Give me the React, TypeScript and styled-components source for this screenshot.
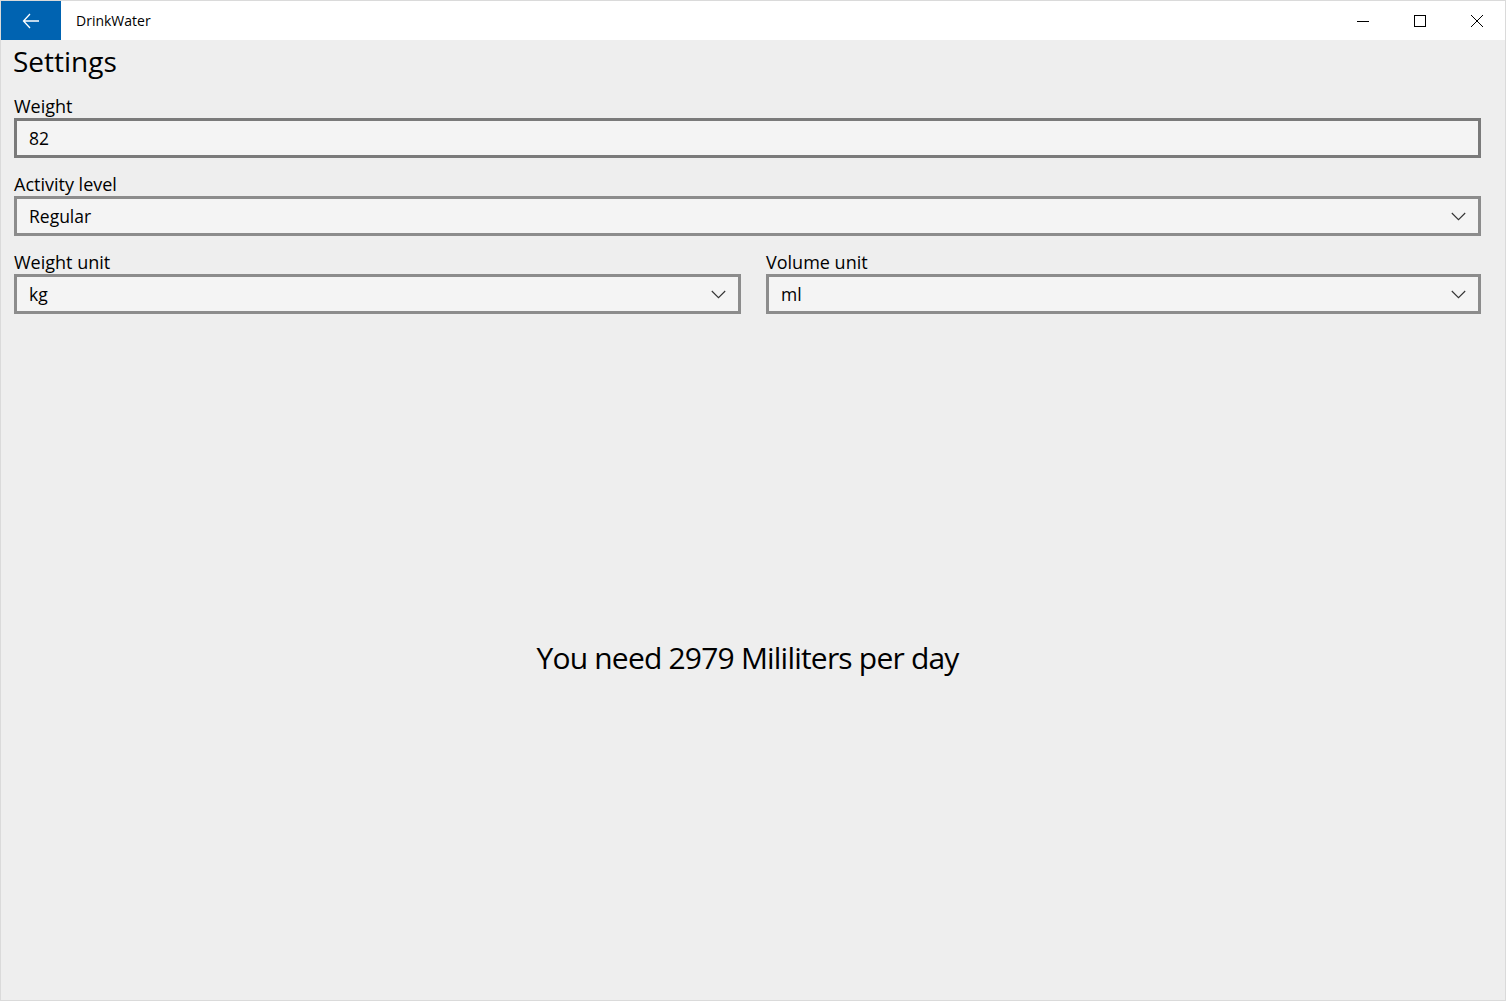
import React from 'react';
import styled, { createGlobalStyle } from 'styled-components';

const GlobalStyle = createGlobalStyle`
    html, body {
        margin: 0;
        padding: 0;
        background: #ffffff;
    }
    * {
        box-sizing: border-box;
    }
`;

const font = `'Open Sans', 'Noto Sans', sans-serif`;

const Chevron = () => (
    <svg width="15" height="9" viewBox="0 0 15 9">
        <path d="M0.8 1 L7.5 7.7 L14.2 1" fill="none" stroke="#333" strokeWidth="1.1" />
    </svg>
);

const ComboBox = ({ value }: { value: string }) => (
    <Combo>
        <FieldText>{value}</FieldText>
        <Chevron />
    </Combo>
);

export default function App() {
    return (
        <>
            <GlobalStyle />
            <Window>
                <TitleBar>
                    <BackButton>
                        <svg width="18" height="16" viewBox="0 0 18 16">
                            <path d="M8 1 L1.5 8 L8 15 M1.5 8 H17" fill="none" stroke="#fff" strokeWidth="1.3" />
                        </svg>
                    </BackButton>
                    <AppTitle>DrinkWater</AppTitle>
                    <Controls>
                        <ControlButton>
                            <svg width="14" height="14" viewBox="0 0 14 14">
                                <path d="M1 7.5 H13" stroke="#000" strokeWidth="1" />
                            </svg>
                        </ControlButton>
                        <ControlButton>
                            <svg width="14" height="14" viewBox="0 0 14 14">
                                <rect x="1.5" y="1.5" width="11" height="11" fill="none" stroke="#000" strokeWidth="1" />
                            </svg>
                        </ControlButton>
                        <ControlButton>
                            <svg width="14" height="14" viewBox="0 0 14 14">
                                <path d="M1 1 L13 13 M13 1 L1 13" stroke="#000" strokeWidth="1" />
                            </svg>
                        </ControlButton>
                    </Controls>
                </TitleBar>
                <Content>
                    <Heading>Settings</Heading>
                    <Fields>
                        <Field>
                            <Label>Weight</Label>
                            <TextBox>
                                <FieldText>82</FieldText>
                            </TextBox>
                        </Field>
                        <Field>
                            <Label>Activity level</Label>
                            <ComboBox value="Regular" />
                        </Field>
                        <UnitRow>
                            <Field>
                                <Label>Weight unit</Label>
                                <ComboBox value="kg" />
                            </Field>
                            <Field>
                                <Label>Volume unit</Label>
                                <ComboBox value="ml" />
                            </Field>
                        </UnitRow>
                    </Fields>
                    <Result>You need 2979 Mililiters per day</Result>
                </Content>
            </Window>
        </>
    );
}

const Window = styled.div`
    display: flex;
    flex-direction: column;
    width: 1506px;
    height: 1001px;
    border: 1px solid #dadada;
    background: #eeeeee;
    font-family: ${font};
    color: #000;
`;

const TitleBar = styled.header`
    display: flex;
    align-items: center;
    height: 39px;
    background: #ffffff;
`;

const BackButton = styled.div`
    display: flex;
    align-items: center;
    justify-content: center;
    width: 60px;
    height: 100%;
    background: #0063b1;
`;

const AppTitle = styled.span`
    flex: 1;
    padding-left: 15px;
    font-size: 14px;
    color: #000;
`;

const Controls = styled.div`
    display: flex;
    height: 100%;
`;

const ControlButton = styled.div`
    display: flex;
    align-items: center;
    justify-content: center;
    width: 57px;
    height: 100%;
`;

const Content = styled.main`
    display: flex;
    flex-direction: column;
    flex: 1;
    padding: 0 24px 0 13px;
`;

const Heading = styled.h1`
    margin: 0 0 2px -1px;
    font-size: 28px;
    font-weight: 400;
    line-height: 42px;
`;

const Fields = styled.div`
    display: flex;
    flex-direction: column;
    gap: 14px;
    margin-top: 10px;
`;

const Field = styled.div`
    display: flex;
    flex-direction: column;
`;

const Label = styled.label`
    font-size: 18px;
    line-height: 24px;
`;

const Box = styled.div`
    display: flex;
    align-items: center;
    height: 40px;
    background: #f4f4f4;
    padding: 0 12px 0 12px;
`;

const TextBox = styled(Box)`
    border: 3px solid #7a7a7a;
`;

const Combo = styled(Box)`
    justify-content: space-between;
    border: 3px solid #8c8c8c;
`;

const FieldText = styled.span`
    font-size: 17.5px;
`;

const UnitRow = styled.div`
    display: grid;
    grid-template-columns: 727fr 715fr;
    gap: 25px;
`;

const Result = styled.div`
    flex: 1;
    display: flex;
    align-items: center;
    justify-content: center;
    font-size: 30px;
    letter-spacing: -0.8px;
`;
